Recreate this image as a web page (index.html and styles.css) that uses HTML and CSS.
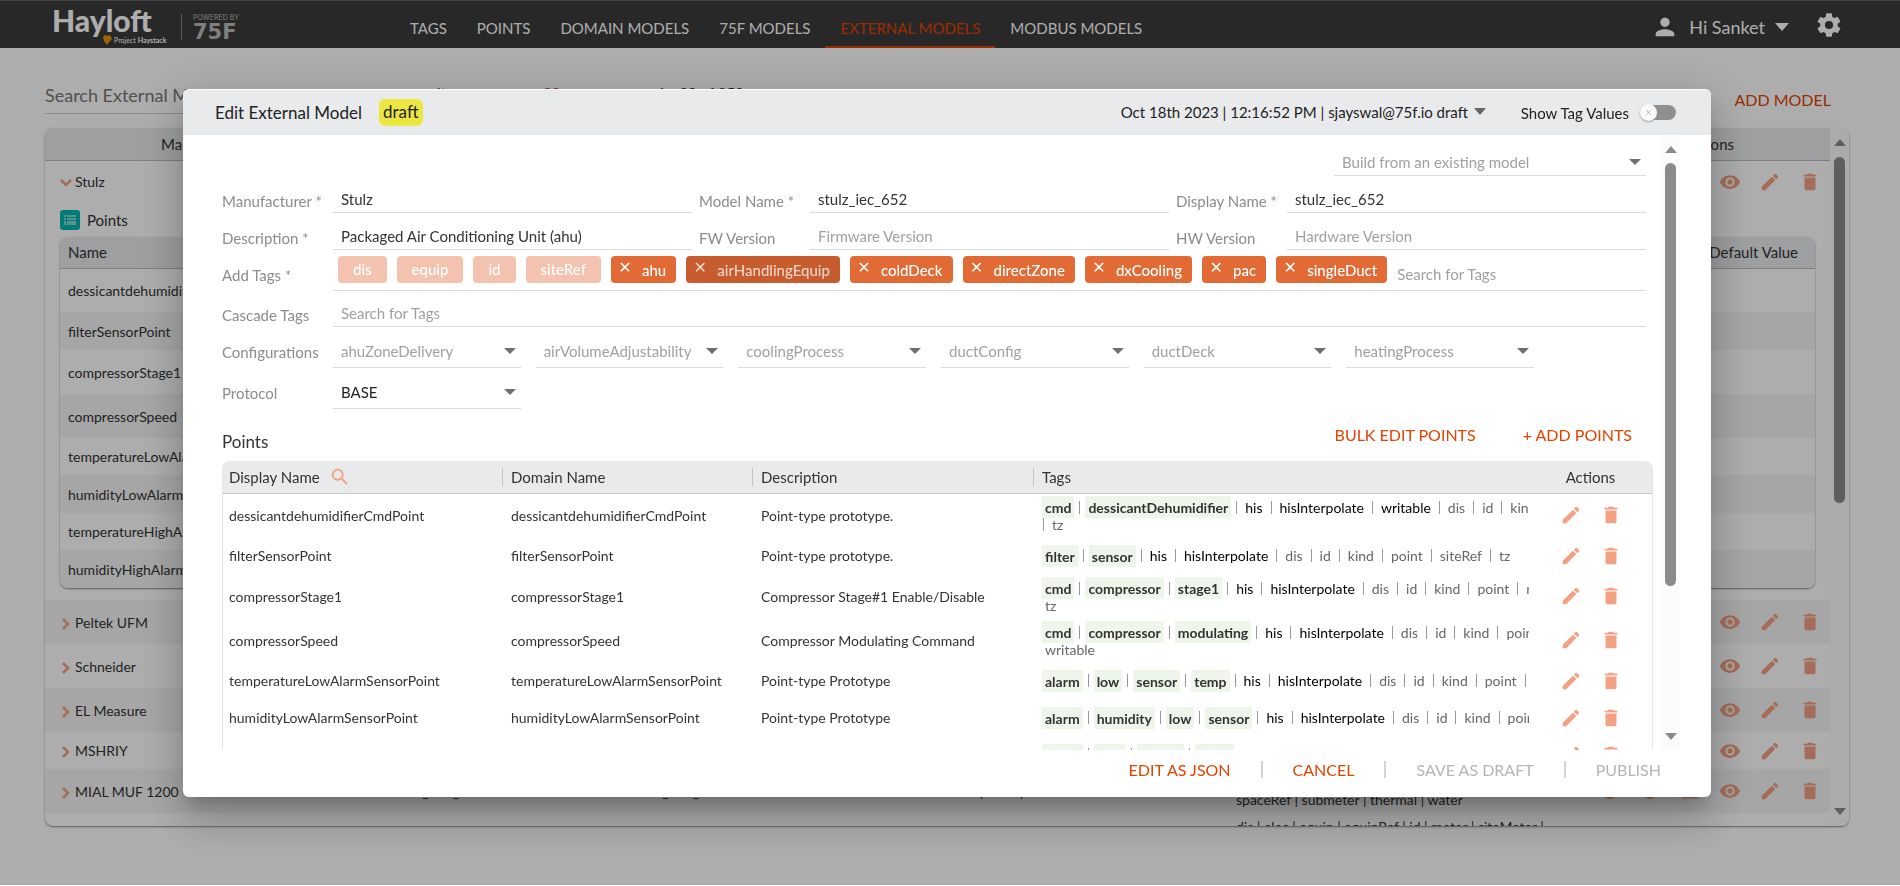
FILE: index.html
```html
<!DOCTYPE html>
<html lang="en">
<head>
    <meta charset="UTF-8">
    <meta name="viewport" content="width=device-width, initial-scale=1.0">
    <title>Hayloft - External Models</title>
    <link rel="stylesheet" href="styles.css">
</head>
<body>

<!-- Icons -->
<svg class="sprite" aria-hidden="true">
    <symbol id="edit" viewBox="0 0 24 24"><path d="M3 17.25V21h3.75L17.81 9.94l-3.75-3.75L3 17.25zM20.71 7.04a1 1 0 0 0 0-1.41l-2.34-2.34a1 1 0 0 0-1.41 0l-1.83 1.83 3.75 3.75 1.83-1.83z"/></symbol>
    <symbol id="delete" viewBox="0 0 24 24"><path d="M6 19c0 1.1.9 2 2 2h8c1.1 0 2-.9 2-2V7H6v12zM19 4h-3.500l-1-1h-5l-1 1H5v2h14V4z"/></symbol>
    <symbol id="eye" viewBox="0 0 24 24"><path d="M12 4.500C7 4.500 2.730 7.610 1 12c1.730 4.390 6 7.500 11 7.500s9.270-3.110 11-7.500c-1.730-4.390-6-7.500-11-7.500zM12 17c-2.760 0-5-2.240-5-5s2.240-5 5-5 5 2.240 5 5-2.240 5-5 5zm0-8c-1.660 0-3 1.340-3 3s1.340 3 3 3 3-1.340 3-3-1.340-3-3-3z"/></symbol>
    <symbol id="circle" viewBox="0 0 24 24"><circle cx="12" cy="12" r="9"/></symbol>
    <symbol id="box" viewBox="0 0 24 24"><path d="M3 5h18v15H3z"/></symbol>
    <symbol id="search" viewBox="0 0 24 24"><path d="M15.500 14h-.790l-.280-.270A6.470 6.470 0 0 0 16 9.500 6.500 6.500 0 1 0 9.500 16c1.610 0 3.090-.590 4.230-1.570l.270.280v.790l5 4.990L20.490 19l-4.990-5zm-6 0C7.010 14 5 11.990 5 9.500S7.010 5 9.500 5 14 7.010 14 9.500 11.990 14 9.500 14z"/></symbol>
    <symbol id="person" viewBox="0 0 24 24"><path d="M12 12c2.210 0 4-1.790 4-4s-1.790-4-4-4-4 1.790-4 4 1.790 4 4 4zm0 2c-2.670 0-8 1.340-8 4v2h16v-2c0-2.660-5.330-4-8-4z"/></symbol>
    <symbol id="gear" viewBox="0 0 24 24"><path d="M19.430 12.980c.040-.320.070-.640.070-.980s-.030-.660-.070-.980l2.110-1.650a.5.5 0 0 0 .120-.640l-2-3.460a.5.5 0 0 0-.610-.220l-2.490 1a7.300 7.300 0 0 0-1.690-.980l-.380-2.650A.490.490 0 0 0 14 2h-4a.490.490 0 0 0-.490.420l-.380 2.650c-.610.250-1.170.590-1.690.980l-2.490-1a.490.490 0 0 0-.610.220l-2 3.460a.490.490 0 0 0 .120.640l2.110 1.650c-.040.320-.070.650-.070.980s.030.660.070.980l-2.110 1.650a.5.5 0 0 0-.120.640l2 3.460c.120.220.390.300.610.220l2.490-1c.520.400 1.080.730 1.690.980l.380 2.650c.030.240.240.420.490.420h4c.250 0 .460-.180.490-.420l.380-2.650a7.300 7.300 0 0 0 1.690-.980l2.490 1c.230.090.490 0 .610-.220l2-3.460a.5.5 0 0 0-.120-.640l-2.110-1.650zM12 15.500A3.500 3.500 0 1 1 12 8.500a3.500 3.500 0 0 1 0 7z"/></symbol>
    <symbol id="down" viewBox="0 0 14 8"><path d="M0 0h14L7 8z"/></symbol>
    <symbol id="chevron-right" viewBox="0 0 10 12"><path d="M2 1l5 5-5 5" fill="none" stroke="currentColor" stroke-width="2.500"/></symbol>
    <symbol id="chevron-down" viewBox="0 0 12 10"><path d="M1 2l5 5 5-5" fill="none" stroke="currentColor" stroke-width="2.500"/></symbol>
</svg>

<header class="topbar">
    <a class="logo" href="#">
        <span class="logo-main">
            <span class="logo-name">Hayloft</span>
            <span class="logo-sub">
                <svg viewBox="0 0 9 10"><path d="M0 2l2-2 3 1 2-1 2 4-2 2-3 4-3-4z"/></svg>Project <b>Haystack</b>
            </span>
        </span>
        <span class="logo-by"><small>POWERED BY</small><span>75F</span></span>
    </a>
    <nav class="menu">
        <a href="#">TAGS</a>
        <a href="#">POINTS</a>
        <a href="#">DOMAIN MODELS</a>
        <a href="#">75F MODELS</a>
        <a href="#" class="active">EXTERNAL MODELS</a>
        <a href="#">MODBUS MODELS</a>
    </nav>
    <button class="user" type="button">
        <svg class="person"><use href="#person"/></svg>
        Hi Sanket
        <svg class="caret"><use href="#down"/></svg>
    </button>
    <button class="settings" type="button" aria-label="Settings"><svg><use href="#gear"/></svg></button>
</header>

<!-- Model list -->
<main class="page">
    <div class="toolbar">
        <input class="page-search" type="text" placeholder="Search External Models" aria-label="Search External Models">
        <div class="pager"><span>lt</span><b>20</b><span>1 - 20 of 253</span></div>
        <button class="link-btn" type="button">ADD MODEL</button>
    </div>
    <div class="card">
        <div class="card-scroll">
            <table class="models">
                <colgroup><col class="c-manu"><col class="c-name"><col class="c-disp"><col class="c-desc"><col class="c-tags"><col></colgroup>
                <thead>
                    <tr><th class="first">Manufacturer</th><th>Model Name</th><th>Display Name</th><th>Version</th><th>Tags</th><th class="last">Actions</th></tr>
                </thead>
                <tbody>
                    <tr class="tall">
                        <td colspan="5"><svg class="chev"><use href="#chevron-down"/></svg>Stulz</td>
                        <td class="icons"><svg><use href="#eye"/></svg><svg><use href="#edit"/></svg><svg><use href="#delete"/></svg></td>
                    </tr>
                    <tr>
                        <td class="nested" colspan="6">
                            <div class="nested-title">
                                <svg viewBox="0 0 20 20"><rect width="20" height="20" rx="3" fill="#00b5ad"/><path d="M4 6h2M7 6h9M4 9h2M7 9h9M4 12h2M7 12h9M4 14h2M7 14h9" stroke="#fff"/></svg>
                                Points
                            </div>
                            <div class="nested-card">
                                <table>
                                    <thead><tr><th>Name</th><th class="right">Default Value</th></tr></thead>
                                    <tbody>
                                        <tr class="two"><td colspan="2">dessicantdehumidifierCmdPoint</td></tr>
                                        <tr><td colspan="2">filterSensorPoint</td></tr>
                                        <tr class="two"><td colspan="2">compressorStage1</td></tr>
                                        <tr class="two"><td colspan="2">compressorSpeed</td></tr>
                                        <tr><td colspan="2">temperatureLowAlarmSensorPoint</td></tr>
                                        <tr><td colspan="2">humidityLowAlarmSensorPoint</td></tr>
                                        <tr><td colspan="2">temperatureHighAlarmSensorPoint</td></tr>
                                        <tr><td colspan="2">humidityHighAlarmSensorPoint</td></tr>
                                    </tbody>
                                </table>
                            </div>
                        </td>
                    </tr>
                    <tr class="two odd">
                        <td colspan="5"><svg class="chev"><use href="#chevron-right"/></svg>Peltek UFM</td>
                        <td class="icons"><svg><use href="#eye"/></svg><svg><use href="#edit"/></svg><svg><use href="#delete"/></svg></td>
                    </tr>
                    <tr class="two">
                        <td colspan="5"><svg class="chev"><use href="#chevron-right"/></svg>Schneider</td>
                        <td class="icons"><svg><use href="#eye"/></svg><svg><use href="#edit"/></svg><svg><use href="#delete"/></svg></td>
                    </tr>
                    <tr class="two odd">
                        <td colspan="5"><svg class="chev"><use href="#chevron-right"/></svg>EL Measure</td>
                        <td class="icons"><svg><use href="#eye"/></svg><svg><use href="#edit"/></svg><svg><use href="#delete"/></svg></td>
                    </tr>
                    <tr>
                        <td colspan="5"><svg class="chev"><use href="#chevron-right"/></svg>MSHRIY</td>
                        <td class="icons"><svg><use href="#eye"/></svg><svg><use href="#edit"/></svg><svg><use href="#delete"/></svg></td>
                    </tr>
                    <tr class="two odd">
                        <td><svg class="chev"><use href="#chevron-right"/></svg>MIAL MUF 1200</td>
                        <td>mial_muf_1200</td>
                        <td>mial_muf_1200</td>
                        <td>(Latest)</td>
                        <td class="tag-lines">dis | equip | equipRef | id | meter<br>spaceRef | submeter | thermal | water</td>
                        <td class="icons"><svg><use href="#circle"/></svg><svg><use href="#circle"/></svg><svg><use href="#box"/></svg><svg><use href="#eye"/></svg><svg><use href="#edit"/></svg><svg><use href="#delete"/></svg></td>
                    </tr>
                    <tr class="short">
                        <td></td><td></td><td></td><td></td>
                        <td class="tag-lines">dis | elec | equip | equipRef | id | meter | siteMeter |</td>
                        <td></td>
                    </tr>
                </tbody>
            </table>
        </div>
        <div class="scrollbar page-scroll"><svg class="up"><use href="#down"/></svg><i></i><svg><use href="#down"/></svg></div>
    </div>
</main>

<!-- Edit dialog -->
<div class="backdrop">
    <section class="modal" role="dialog" aria-labelledby="dialogTitle">
        <div class="modal-header">
            <h2 id="dialogTitle">Edit External Model</h2>
            <span class="status">draft</span>
            <button class="version" type="button">Oct 18th 2023 | 12:16:52 PM | sjayswal@75f.io draft <svg><use href="#down"/></svg></button>
            <label for="showTags">Show Tag Values</label>
            <input class="toggle" type="checkbox" id="showTags">
        </div>

        <div class="modal-body">
            <div class="modal-content">
                <form class="form">
                    <div class="row build">
                        <div class="select"><select aria-label="Build from an existing model"><option>Build from an existing model</option></select></div>
                    </div>
                    <div class="row three">
                        <div class="field"><label for="manufacturer">Manufacturer *</label><input type="text" id="manufacturer" value="Stulz"></div>
                        <div class="field"><label for="modelName">Model Name *</label><input type="text" id="modelName" value="stulz_iec_652"></div>
                        <div class="field"><label for="displayName">Display Name *</label><input type="text" id="displayName" value="stulz_iec_652"></div>
                    </div>
                    <div class="row three">
                        <div class="field"><label for="description">Description *</label><input type="text" id="description" value="Packaged Air Conditioning Unit (ahu)"></div>
                        <div class="field"><label for="fwVersion">FW Version</label><input type="text" id="fwVersion" placeholder="Firmware Version"></div>
                        <div class="field"><label for="hwVersion">HW Version</label><input type="text" id="hwVersion" placeholder="Hardware Version"></div>
                    </div>
                    <div class="row field low">
                        <label for="addTags">Add Tags *</label>
                        <div class="chips">
                            <span class="chip fixed">dis</span>
                            <span class="chip fixed">equip</span>
                            <span class="chip fixed">id</span>
                            <span class="chip fixed">siteRef</span>
                            <span class="chip"><button type="button" aria-label="Remove ahu">✕</button>ahu</span>
                            <span class="chip hover"><button type="button" aria-label="Remove airHandlingEquip">✕</button>airHandlingEquip</span>
                            <span class="chip"><button type="button" aria-label="Remove coldDeck">✕</button>coldDeck</span>
                            <span class="chip"><button type="button" aria-label="Remove directZone">✕</button>directZone</span>
                            <span class="chip"><button type="button" aria-label="Remove dxCooling">✕</button>dxCooling</span>
                            <span class="chip"><button type="button" aria-label="Remove pac">✕</button>pac</span>
                            <span class="chip"><button type="button" aria-label="Remove singleDuct">✕</button>singleDuct</span>
                            <input type="text" id="addTags" placeholder="Search for Tags">
                        </div>
                    </div>
                    <div class="row field cascade">
                        <label for="cascadeTags">Cascade Tags</label>
                        <input type="text" id="cascadeTags" placeholder="Search for Tags">
                    </div>
                    <div class="row field low">
                        <label for="ahuZone">Configurations</label>
                        <div class="configs">
                            <div class="select"><select id="ahuZone"><option>ahuZoneDelivery</option></select></div>
                            <div class="select"><select aria-label="airVolumeAdjustability"><option>airVolumeAdjustability</option></select></div>
                            <div class="select"><select aria-label="coolingProcess"><option>coolingProcess</option></select></div>
                            <div class="select"><select aria-label="ductConfig"><option>ductConfig</option></select></div>
                            <div class="select"><select aria-label="ductDeck"><option>ductDeck</option></select></div>
                            <div class="select"><select aria-label="heatingProcess"><option>heatingProcess</option></select></div>
                        </div>
                    </div>
                    <div class="row field low">
                        <label for="protocol">Protocol</label>
                        <div class="configs">
                            <div class="select chosen"><select id="protocol"><option>BASE</option></select></div>
                        </div>
                    </div>
                </form>

                <div class="points-bar">
                    <h3>Points</h3>
                    <button class="link-btn" type="button">BULK EDIT POINTS</button>
                    <button class="link-btn" type="button">+ ADD POINTS</button>
                </div>

                <div class="points-card">
                    <table class="points">
                        <colgroup><col class="p-display"><col class="p-domain"><col class="p-desc"><col><col class="p-actions"></colgroup>
                        <thead>
                            <tr>
                                <th><span>Display Name <svg class="find"><use href="#search"/></svg></span></th>
                                <th><span>Domain Name</span></th>
                                <th><span>Description</span></th>
                                <th><span>Tags</span></th>
                                <th class="center">Actions</th>
                            </tr>
                        </thead>
                        <tbody>
                            <tr class="two">
                                <td>dessicantdehumidifierCmdPoint</td><td>dessicantdehumidifierCmdPoint</td><td>Point-type prototype.</td>
                                <td><div class="tags"><b>cmd</b><i></i><b>dessicantDehumidifier</b><i></i><em>his</em><i></i><em>hisInterpolate</em><i></i><em>writable</em><i></i><span>dis</span><i></i><span>id</span><i></i><span>kind</span></div><div class="tags more"><i></i><span>tz</span></div></td>
                                <td class="icons"><svg><use href="#edit"/></svg><svg><use href="#delete"/></svg></td>
                            </tr>
                            <tr>
                                <td>filterSensorPoint</td><td>filterSensorPoint</td><td>Point-type prototype.</td>
                                <td><div class="tags"><b>filter</b><i></i><b>sensor</b><i></i><em>his</em><i></i><em>hisInterpolate</em><i></i><span>dis</span><i></i><span>id</span><i></i><span>kind</span><i></i><span>point</span><i></i><span>siteRef</span><i></i><span>tz</span></div></td>
                                <td class="icons"><svg><use href="#edit"/></svg><svg><use href="#delete"/></svg></td>
                            </tr>
                            <tr class="two">
                                <td>compressorStage1</td><td>compressorStage1</td><td>Compressor Stage#1 Enable/Disable</td>
                                <td><div class="tags"><b>cmd</b><i></i><b>compressor</b><i></i><b>stage1</b><i></i><em>his</em><i></i><em>hisInterpolate</em><i></i><span>dis</span><i></i><span>id</span><i></i><span>kind</span><i></i><span>point</span><i></i><span>runState</span></div><div class="tags more"><span>tz</span></div></td>
                                <td class="icons"><svg><use href="#edit"/></svg><svg><use href="#delete"/></svg></td>
                            </tr>
                            <tr class="two">
                                <td>compressorSpeed</td><td>compressorSpeed</td><td>Compressor Modulating Command</td>
                                <td><div class="tags"><b>cmd</b><i></i><b>compressor</b><i></i><b>modulating</b><i></i><em>his</em><i></i><em>hisInterpolate</em><i></i><span>dis</span><i></i><span>id</span><i></i><span>kind</span><i></i><span>point</span></div><div class="tags more"><span>writable</span></div></td>
                                <td class="icons"><svg><use href="#edit"/></svg><svg><use href="#delete"/></svg></td>
                            </tr>
                            <tr>
                                <td>temperatureLowAlarmSensorPoint</td><td>temperatureLowAlarmSensorPoint</td><td>Point-type Prototype</td>
                                <td><div class="tags"><b>alarm</b><i></i><b>low</b><i></i><b>sensor</b><i></i><b>temp</b><i></i><em>his</em><i></i><em>hisInterpolate</em><i></i><span>dis</span><i></i><span>id</span><i></i><span>kind</span><i></i><span>point</span><i></i><span>siteRef</span></div></td>
                                <td class="icons"><svg><use href="#edit"/></svg><svg><use href="#delete"/></svg></td>
                            </tr>
                            <tr>
                                <td>humidityLowAlarmSensorPoint</td><td>humidityLowAlarmSensorPoint</td><td>Point-type Prototype</td>
                                <td><div class="tags"><b>alarm</b><i></i><b>humidity</b><i></i><b>low</b><i></i><b>sensor</b><i></i><em>his</em><i></i><em>hisInterpolate</em><i></i><span>dis</span><i></i><span>id</span><i></i><span>kind</span><i></i><span>point</span></div></td>
                                <td class="icons"><svg><use href="#edit"/></svg><svg><use href="#delete"/></svg></td>
                            </tr>
                            <tr>
                                <td>temperatureHighAlarmSensorPoint</td><td>temperatureHighAlarmSensorPoint</td><td>Point-type Prototype</td>
                                <td><div class="tags"><b>alarm</b><i></i><b>high</b><i></i><b>sensor</b><i></i><b>temp</b></div></td>
                                <td class="icons"><svg><use href="#edit"/></svg><svg><use href="#delete"/></svg></td>
                            </tr>
                        </tbody>
                    </table>
                </div>
            </div>
            <div class="scrollbar modal-scroll"><svg class="up"><use href="#down"/></svg><i></i><svg><use href="#down"/></svg></div>
        </div>

        <div class="modal-footer">
            <button class="link-btn" type="button">EDIT AS JSON</button>
            <button class="link-btn" type="button">CANCEL</button>
            <button class="link-btn" type="button" disabled>SAVE AS DRAFT</button>
            <button class="link-btn" type="button" disabled>PUBLISH</button>
        </div>
    </section>
</div>

</body>
</html>
```
FILE: styles.css
```css
* {
    box-sizing: border-box;
}
body {
    margin: 0;
    height: 100vh;
    overflow: hidden;
    display: flex;
    flex-direction: column;
    background: #fff;
    color: #333;
    font-family: Lato, sans-serif;
    font-size: 14px;
}
button, input, select {
    font: inherit;
    color: inherit;
    background: none;
    border: none;
    padding: 0;
    outline: none;
}
button {
    cursor: pointer;
}
svg {
    fill: currentColor;
    flex: none;
}
table {
    width: 100%;
    border-collapse: collapse;
    table-layout: fixed;
}
th {
    font-weight: 400;
    font-size: 15px;
    text-align: left;
    background: #e9eaec;
}
.sprite {
    position: absolute;
    width: 0;
    height: 0;
}
.link-btn {
    color: #e24301;
    font-size: 16px;
    line-height: 22px;
}
.link-btn:disabled {
    color: #b5b5b5;
}

/* Top bar */
.topbar {
    display: flex;
    flex: none;
    height: 48px;
    padding: 0 57px 0 52px;
    background: #3c3c3c;
    border-top: 1px solid #666;
    color: #fff;
}
.logo {
    display: flex;
    width: 343px;
    padding-top: 4px;
    color: #fff;
    text-decoration: none;
}
.logo-main {
    width: 129px;
    height: 39px;
}
.logo-name {
    display: block;
    font-size: 30px;
    font-weight: 900;
    line-height: 30px;
}
.logo-sub {
    display: flex;
    align-items: center;
    gap: 2px;
    padding-left: 51px;
    font-size: 7px;
    line-height: 9px;
    white-space: nowrap;
}
.logo-sub svg {
    width: 9px;
    height: 10px;
    color: #e8960c;
}
.logo-by {
    display: flex;
    flex-direction: column;
    justify-content: center;
    gap: 1px;
    height: 26px;
    margin-top: 9px;
    padding-left: 11px;
    border-left: 1px solid #888;
    color: #bbb;
    font-family: "DejaVu Sans", sans-serif;
    font-size: 21px;
    font-weight: 700;
    line-height: 18px;
}
.logo-by small {
    font-family: Inter, sans-serif;
    font-size: 7px;
    font-weight: 400;
    line-height: 8px;
}
.menu {
    display: flex;
    flex: 1;
}
.menu a {
    padding: 16px 15px 0;
    color: #fff;
    font-size: 15px;
    line-height: 22px;
    text-decoration: none;
}
.menu .active {
    color: #e24301;
    border-bottom: 2px solid #e24301;
}
.user {
    display: flex;
    align-items: center;
    gap: 10px;
    margin-right: 26px;
    padding-top: 4px;
    font-size: 18px;
}
.person {
    width: 28px;
    height: 28px;
}
.caret {
    width: 14px;
    height: 8px;
}
.settings svg {
    display: block;
    width: 28px;
    height: 28px;
}

/* Model list */
.page {
    flex: 1;
    min-height: 0;
    display: flex;
    flex-direction: column;
    padding: 30px 51px 60px 45px;
}
.toolbar {
    display: flex;
    justify-content: space-between;
    height: 50px;
    padding-right: 18px;
}
.page-search {
    width: 320px;
    height: 36px;
    padding-bottom: 2px;
    border-bottom: 1px solid #ccc;
    font-size: 18px;
}
.page-search::placeholder {
    color: #777;
}
.pager {
    display: flex;
    flex: 1;
    gap: 97px;
    padding: 6px 0 0 72px;
    font-size: 15px;
}
.pager b {
    color: #e24301;
}
.toolbar .link-btn {
    height: 44px;
}
.card {
    flex: 1;
    min-height: 0;
    display: flex;
    border-radius: 8px;
    overflow: hidden;
    box-shadow: 0 1px 2px #888;
}
.card-scroll {
    flex: 1;
    overflow: hidden;
}
.models th {
    height: 32px;
    padding: 0;
    border-bottom: 1px solid #bbb;
}
.models .first {
    padding-left: 116px;
}
.models .last {
    padding-right: 96px;
    text-align: right;
}
.models td {
    height: 37px;
    padding: 0;
    white-space: nowrap;
}
.models td:first-child {
    padding-left: 15px;
}
.models .two td {
    height: 44px;
}
.models .tall td {
    height: 43px;
}
.models .short td {
    height: 26px;
}
.models .odd {
    background: #f5f5f5;
}
.c-manu { width: 352px; }
.c-name { width: 240px; }
.c-disp { width: 342px; }
.c-desc { width: 257px; }
.c-tags { width: 330px; }
.chev {
    width: 12px;
    height: 12px;
    margin-right: 3px;
    vertical-align: -2px;
    color: #f3a183;
}
.icons {
    color: #f3a183;
    text-align: right;
}
.icons svg {
    width: 22px;
    height: 22px;
    margin-left: 18px;
    vertical-align: middle;
}
.models .icons {
    padding-right: 9px;
}
.tag-lines {
    line-height: 17px;
}
.models td.nested {
    padding: 0 15px 12px 15px;
}
.nested-title {
    display: flex;
    align-items: center;
    gap: 7px;
    height: 34px;
    font-size: 15px;
}
.nested-title svg {
    width: 20px;
    height: 20px;
}
.nested-card {
    border-radius: 8px;
    overflow: hidden;
    box-shadow: 0 1px 2px #888;
}
.nested th {
    height: 31px;
    padding: 0 8px;
}
.nested .right {
    padding-right: 17px;
    text-align: right;
}
.nested td:first-child {
    padding-left: 8px;
}
.nested tbody tr:nth-child(even) {
    background: #f5f5f5;
}
.nested tr:nth-child(even):not(.two) td {
    height: 38px;
}

/* Scrollbars */
.scrollbar {
    display: flex;
    flex-direction: column;
    align-items: center;
    justify-content: space-between;
    width: 19px;
    background: #fcfcfc;
    color: #8b8b8b;
}
.scrollbar svg {
    width: 12px;
    height: 9px;
}
.scrollbar .up {
    transform: rotate(180deg);
}
.scrollbar i {
    width: 11px;
    border-radius: 6px;
    background: #8b8b8b;
}
.page-scroll {
    padding: 10px 0;
}
.page-scroll i {
    height: 51%;
    margin: 10px 0 auto;
}
.modal-scroll {
    padding: 10px 0 9px;
}
.modal-scroll i {
    height: 71%;
    margin: 9px 0 auto;
}

/* Dialog */
.backdrop {
    position: fixed;
    inset: 0 0 1px;
    display: flex;
    padding: 89px 189px 88px 183px;
    background: rgba(0, 0, 0, .32);
}
.modal {
    flex: 1;
    min-width: 0;
    display: flex;
    flex-direction: column;
    border-radius: 6px;
    border-top: 1px solid #fff;
    background: #fff;
    overflow: hidden;
    box-shadow: 0 11px 15px -7px rgba(0, 0, 0, .2), 0 24px 38px 3px rgba(0, 0, 0, .14), 0 9px 46px 8px rgba(0, 0, 0, .12);
}
.modal-header {
    display: flex;
    align-items: center;
    flex: none;
    height: 45px;
    padding: 0 35px 0 32px;
    background: #e9eaec;
    color: #222;
    font-size: 15px;
}
.modal-header h2 {
    margin: 0 17px 0 0;
    font-size: 17px;
    font-weight: 400;
}
.status {
    padding: 2px 4px 3px;
    border-radius: 6px;
    background: #ece642;
    font-size: 17px;
    line-height: 22px;
}
.version {
    margin: 0 35px 2px auto;
}
.version svg {
    width: 12px;
    height: 7px;
    margin-left: 2px;
    color: #666;
    vertical-align: 3px;
}
.toggle {
    appearance: none;
    display: flex;
    width: 32px;
    height: 15px;
    margin: 0 0 0 15px;
    border-radius: 8px;
    background: #8f8f8f;
}
.toggle::before {
    content: "x";
    width: 17px;
    height: 17px;
    margin: -1px 0 0 -4px;
    border-radius: 50%;
    background: #fafafa;
    box-shadow: 0 1px 2px #999;
    color: #bbb;
    font-size: 10px;
    line-height: 15px;
    text-align: center;
}
.modal-body {
    flex: 1;
    min-height: 0;
    display: flex;
    gap: 8px;
    padding: 0 31px 0 39px;
}
.modal-content {
    flex: 1;
    min-width: 0;
    overflow: hidden;
}
.form {
    padding-right: 7px;
    font-size: 15px;
}
.row {
    min-height: 37px;
}
.build {
    display: flex;
    justify-content: flex-end;
    align-items: flex-end;
    min-height: 41px;
}
.three {
    display: grid;
    grid-template-columns: repeat(3, 1fr);
    gap: 7px;
}
.field {
    display: flex;
    align-items: flex-end;
}
.field label {
    flex: none;
    width: 111px;
    color: #8c8c8c;
    line-height: 24px;
}
.low {
    min-height: 41px;
}
.low label {
    line-height: 32px;
}
.cascade {
    min-height: 36px;
}
.field input {
    flex: 1;
    min-width: 0;
    height: 28px;
    padding: 0 8px;
    border-bottom: 1px solid #dadada;
}
.field input::placeholder {
    color: #a0a0a0;
}
.select {
    display: flex;
    align-items: center;
    height: 34px;
    padding: 0 5px 0 8px;
    border-bottom: 1px solid #dadada;
    color: #a0a0a0;
}
.build .select {
    width: 312px;
    height: 28px;
}
.select select {
    appearance: none;
    flex: 1;
    min-width: 0;
}
.select::after {
    content: "";
    border: 6px solid transparent;
    border-top-color: #707070;
    border-bottom: none;
}
.chosen {
    color: #222;
}
.configs {
    display: grid;
    grid-template-columns: repeat(6, 1fr);
    gap: 15px;
    width: 1201px;
}
.chips {
    display: flex;
    flex: 1;
    gap: 10px;
    height: 35px;
    padding: 0 0 7px 5px;
    border-bottom: 1px solid #dadada;
}
.chip {
    display: flex;
    height: 27px;
    padding: 1px 10px 0 7px;
    border-radius: 4px;
    background: #e26a35;
    color: #fff;
    line-height: 27px;
    font-weight: 500;
}
.chip button {
    width: 14px;
    height: 22px;
    margin-right: 10px;
    font-family: "DejaVu Sans", sans-serif;
    font-size: 16px;
    line-height: 22px;
}
.chip.fixed {
    padding: 0 15px;
    background: #f4c3af;
}
.chip.hover {
    background: #c75c2f;
    color: #f0d5c9;
}
.chips input {
    padding: 0;
    height: 35px;
    border: none;
}

/* Points */
.points-bar {
    display: flex;
    align-items: flex-end;
    height: 52px;
    padding-right: 21px;
}
.points-bar h3 {
    margin: 0 auto 8px 0;
    font-size: 17px;
    font-weight: 400;
    line-height: 22px;
}
.points-bar .link-btn {
    margin: 0 0 15px 47px;
}
.points-card {
    border-right: 1px solid #e6e6e6;
    border-radius: 8px;
    box-shadow: inset 1px 0 #e6e6e6;
    overflow: hidden;
}
.points th {
    height: 32px;
    padding: 0 0 0 7px;
    border-bottom: 1px solid #c8c8c8;
}
.points th + th {
    padding-left: 0;
}
.points th span {
    display: flex;
    align-items: center;
    gap: 9px;
    line-height: 18px;
}
.points th + th span {
    padding-left: 8px;
    border-left: 1px solid #c4c4c4;
}
.points .center {
    text-align: center;
}
.find {
    width: 22px;
    height: 22px;
    margin: -2px 0;
    color: #f3a183;
}
.points td {
    height: 37px;
    padding: 0 0 0 9px;
    white-space: nowrap;
}
.points td:first-child {
    padding-left: 7px;
}
.points .two td {
    height: 44px;
}
.p-display { width: 280px; }
.p-domain { width: 250px; }
.p-desc { width: 281px; }
.p-actions { width: 123px; }
.points .icons {
    padding-right: 30px;
}
.tags {
    display: flex;
    align-items: center;
    height: 22px;
    overflow: hidden;
}
.tags b {
    padding: 3px 3px 2px;
    background: #eef5ea;
    line-height: 17px;
}
.tags em {
    padding: 0 3px;
    color: #000;
    font-style: normal;
}
.tags span {
    padding: 0 3px;
    color: #666;
}
.tags i {
    flex: none;
    width: 1px;
    height: 13px;
    margin: 0 5px;
    background: #999;
}
.tags.more {
    align-items: flex-start;
    height: 16px;
    line-height: 14px;
}
.tags.more i {
    margin-left: 1px;
}
.modal-footer {
    display: flex;
    justify-content: flex-end;
    align-items: flex-start;
    flex: none;
    height: 47px;
    padding: 9px 50px 0;
}
.modal-footer .link-btn + .link-btn {
    display: flex;
}
.modal-footer .link-btn + .link-btn::before {
    content: "";
    width: 2px;
    height: 17px;
    margin: 2px 30px;
    background: #d4d4d4;
}
```
